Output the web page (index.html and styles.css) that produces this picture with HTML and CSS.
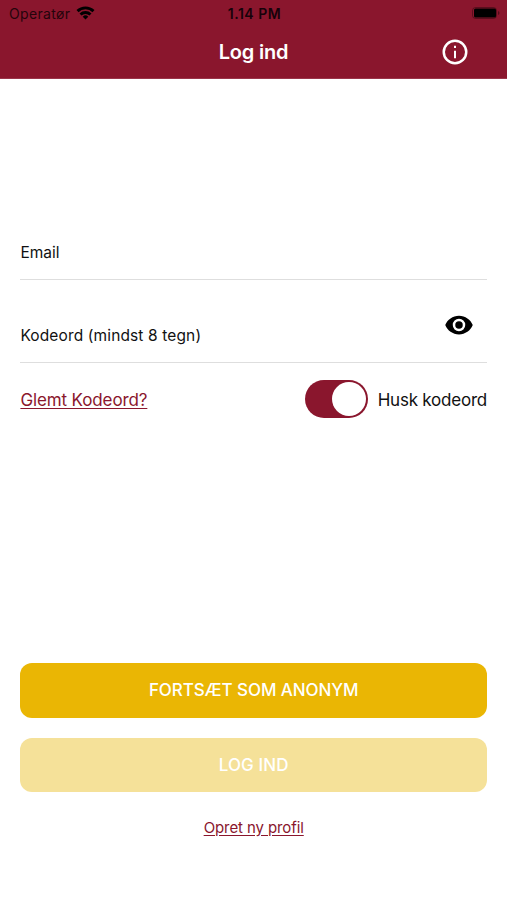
FILE: index.html
```html
<!DOCTYPE html>
<html lang="da">
<head>
<meta charset="utf-8">
<title>Log ind</title>
<link rel="stylesheet" href="styles.css">
</head>
<body>
<header class="header">
  <div class="status">
    <div class="carrier"><span class="carrier-name">Operatør</span>
      <svg class="wifi" viewBox="0 0 18 14" width="19" height="14"><g fill="none" stroke="#000" stroke-width="2.9"><path d="M1 5.1A11.5 11.5 0 0 1 17 5.1"/><path d="M4 8.5A7.2 7.2 0 0 1 14 8.500"/></g><path d="M9 13.5L6.2 10.7A4 4 0 0 1 11.8 10.7Z"/></svg>
    </div>
    <span class="time">1.14 PM</span>
    <svg class="battery" viewBox="0 0 28 12" width="28" height="12"><rect x=".5" y=".5" width="24" height="11" rx="3" fill="none" stroke="#000" stroke-opacity=".35"/><rect x="2" y="1.500" width="22" height="9" rx="1.500"/><path d="M26 4v4q1.5-.7 1.5-2T26 4" opacity=".4"/></svg>
  </div>
  <div class="nav">
    <h1 class="title">Log ind</h1>
    <svg class="info" viewBox="0 0 24 24" width="30" height="30" fill="#fff"><path d="M11.200 7h1.600v1.800h-1.600zm0 4h1.600v6h-1.600zm.8-9a10 10 0 1 0 0 20 10 10 0 0 0 0-20zm0 18a8 8 0 1 1 0-16 8 8 0 0 1 0 16z"/></svg>
  </div>
</header>
<main class="main">
  <div class="field email"><label class="label">Email</label></div>
  <div class="field password"><label class="label password-label">Kodeord (mindst 8 tegn)</label>
    <svg class="eye" viewBox="0 0 24 24" width="30" height="30"><path d="M12 4.500C7 4.500 2.700 7.600 1 12c1.700 4.400 6 7.500 11 7.500s9.300-3.100 11-7.500c-1.700-4.400-6-7.500-11-7.500zM12 17a5 5 0 1 1 0-10 5 5 0 0 1 0 10zm0-8a3 3 0 1 0 0 6 3 3 0 0 0 0-6z"/></svg>
  </div>
  <div class="options"><a class="link forgot">Glemt Kodeord?</a><span class="switch"><span class="knob"></span></span><span class="remember">Husk kodeord</span></div>
  <div class="actions">
    <button class="btn"><span class="anonymous">FORTSÆT SOM ANONYM</span></button>
    <button class="btn disabled"><span class="login">LOG IND</span></button>
    <a class="link create">Opret ny profil</a>
  </div>
</main>
</body>
</html>
```
FILE: styles.css
```css
* { box-sizing: border-box; }
body { margin: 0; width: 507px; height: 900px; background: #fff; color: #111; font-family: Inter, "Liberation Sans", sans-serif; overflow: hidden; }
.header { height: 79px; background: #8a162d; border-bottom: 1px solid #9a354a; }
.status { height: 27px; display: grid; grid-template-columns: 1fr auto 1fr; align-items: center; padding: 0 7px 0 9px; color: #000; font-size: 14px; }
.carrier { display: flex; align-items: center; gap: 6px; color: #25040b; }
.carrier-name { letter-spacing: .32px; }
.wifi { margin-bottom: 2px; }
.time { font-weight: 600; letter-spacing: .5px; color: #16020a; }
.battery { justify-self: end; margin-bottom: 1px; }
.nav { height: 50px; display: grid; grid-template-columns: 1fr auto 1fr; align-items: center; padding: 0 37px; }
.title { grid-column: 2; margin: 0; color: #fff; font-size: 20px; font-weight: 600; letter-spacing: -.18px; }
.info { justify-self: end; margin-right: -.3px; }
.main { height: 821px; padding: 0 20px 0 20.4px; display: flex; flex-direction: column; }
.field { display: flex; align-items: flex-end; justify-content: space-between; border-bottom: 1px solid #dedede; flex: none; }
.email { height: 201px; }
.password { height: 83px; }
.label { font-size: 15.5px; line-height: 20px; margin: 0 0 16px; letter-spacing: .02px; }
.password-label { letter-spacing: .13px; }
.eye { margin: 0 13px 22px 0; }
.options { height: 73px; display: flex; align-items: center; font-size: 17px; }
.link { color: #8a162d; text-decoration: underline; text-underline-offset: 2px; }
.forgot { margin-right: auto; letter-spacing: -.12px; }
.switch { width: 63px; height: 38px; border-radius: 19px; background: #8a162d; padding: 2px; display: flex; justify-content: flex-end; margin: 0 9.5px .5px 0; }
.knob { width: 34px; height: 34px; border-radius: 50%; background: #fff; }
.remember { letter-spacing: -.22px; }
.actions { margin-top: 226.5px; display: flex; flex-direction: column; align-items: center; }
.btn { width: 100%; height: 55px; border: 0; border-radius: 12px; background: #eab604; color: #fff; font: 550 17px Inter, sans-serif; margin-bottom: 20px; padding: 0 0 1px; }
.disabled { background: #f5e199; height: 54.5px; padding: 0; }
.anonymous { letter-spacing: -.08px; }
.login { letter-spacing: .1px; }
.create { font-size: 15px; line-height: 20px; margin-top: 6px; letter-spacing: -.1px; }
```
